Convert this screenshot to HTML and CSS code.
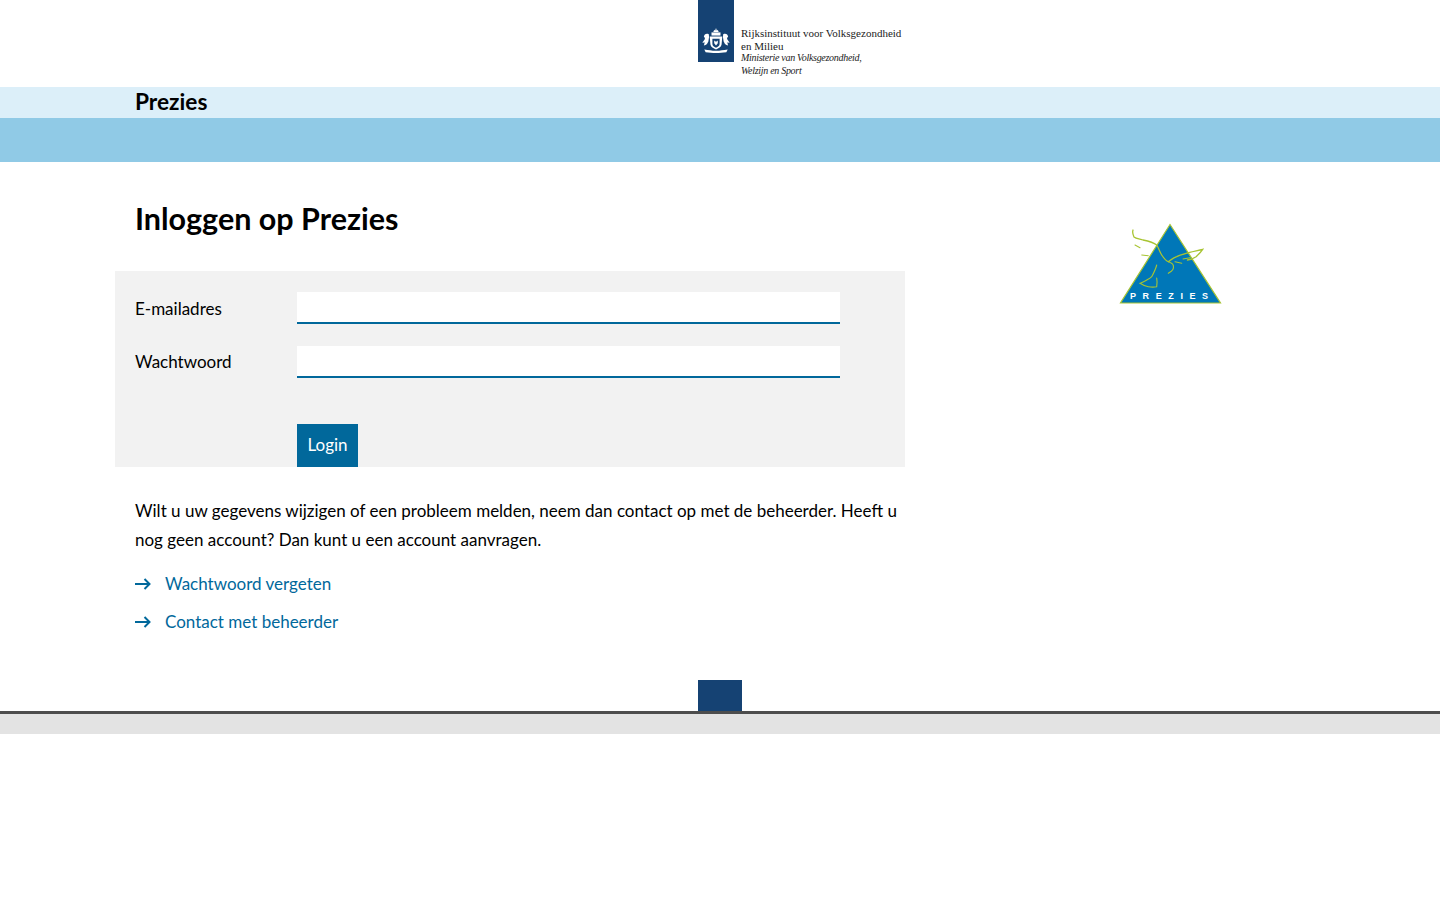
FILE: index.html
```html
<!DOCTYPE html>
<html lang="nl">
<head>
    <meta charset="UTF-8">
    <title>Inloggen op Prezies</title>
    <link rel="stylesheet" href="styles.css">
</head>
<body>
    <header class="top">
        <div class="logo">
            <div class="logo-bar">
                <svg class="crest" width="30" height="27" viewBox="0 0 32 30">
                    <g fill="#fff">
                        <path d="M13 5.500l1-2.500 1 1.200L16 1l1 3.200 1-1.200 1 2.500z"/>
                        <path d="M9 10.500h14l-.8 9c-.4 3-3.200 4.200-6.200 5.500-3-1.300-5.800-2.500-6.200-5.500z"/>
                        <path d="M8 8c-3-1-5 0-5.500 3 1 .5 1.500 1 1 2.500-1 1.500-2 3-3 3.500 1.500.5 2 .5 3 0-.5 1.500-.5 2.500-1 3.500 1.500 0 2.500-.5 3.500-1.500l1.500-3 .8-5z"/>
                        <path d="M24 8c3-1 5 0 5.500 3-1 .5-1.500 1-1 2.500 1 1.500 2 3 3 3.500-1.500.5-2 .5-3 0 .5 1.500.5 2.500 1 3.500-1.500 0-2.500-.5-3.500-1.500l-1.500-3-.8-5z"/>
                        <path d="M3 25c5 .5 8 1.500 13 1.500s8-1 13-1.500l-1.500 3c-4 .5-7.500 1-11.500 1s-7.500-.5-11.500-1z"/>
                        <path d="M11 6h10v3.500H11z"/>
                    </g>
                    <path d="M12 13h8v6c0 2-2 3-4 4-2-1-4-2-4-4z" fill="#154273"/>
                    <path d="M14 15l2 1.500 2-1.500v3l-2 2.500-2-2.500z" fill="#fff"/>
                </svg>
            </div>
            <div class="logo-text">
                <span class="org">Rijksinstituut voor Volksgezondheid</span>
                <span class="org">en Milieu</span>
                <span class="ministry">Ministerie van Volksgezondheid,</span>
                <span class="ministry">Welzijn en Sport</span>
            </div>
        </div>
    </header>

    <div class="app-bar"><div class="app-name">Prezies</div></div>
    <div class="nav-bar"></div>

    <main class="page">
        <div class="content">
            <h1>Inloggen op Prezies</h1>
            <form class="login-form">
                <div class="form-row">
                    <label for="email">E-mailadres</label>
                    <input id="email" type="text">
                </div>
                <div class="form-row">
                    <label for="password" class="label-raised">Wachtwoord</label>
                    <input id="password" type="password">
                </div>
                <div class="form-actions">
                    <button type="button" class="btn">Login</button>
                </div>
            </form>
            <p class="intro">Wilt u uw gegevens wijzigen of een probleem melden, neem dan contact op met de beheerder. Heeft u nog geen account? Dan kunt u een account aanvragen.</p>
            <ul class="links">
                <li>
                    <svg width="16" height="12" viewBox="0 0 16 12"><path d="M0 6h14.500M9.500 1l5 5-5 5" fill="none" stroke="#01689b" stroke-width="2"/></svg>
                    <a href="#">Wachtwoord vergeten</a>
                </li>
                <li>
                    <svg width="16" height="12" viewBox="0 0 16 12"><path d="M0 6h14.500M9.500 1l5 5-5 5" fill="none" stroke="#01689b" stroke-width="2"/></svg>
                    <a href="#">Contact met beheerder</a>
                </li>
            </ul>
        </div>
        <aside class="side">
            <svg class="prezies" width="103" height="84" viewBox="0 0 103 84">
                <path d="M51 2.500L101.500 81H1.500z" fill="#0077b8" stroke="#a8c432" stroke-width="1.200"/>
                <path d="M14 8c-1 3 0 5 1 7 2 2 6 2 9 3 5 1 10 2 13.700 5 2 3 3 7 5 10 2 3 4 6 6.600 6.700 3-2 5-4 8.400-5 4-2 9-3 13-4.400 4-1 9-2 13-3-2 3-4 5-6.600 7.400-3 2-6 3-8.700 3.300" fill="none" stroke="#a8c432" stroke-width="1.300" stroke-linecap="round"/>
                <g fill="none" stroke="#a8c432" stroke-width="1.100" stroke-linecap="round">
                    <path d="M49.300 39.700c3 1 5 2 5 4 .5 2 0 4-2 5.500l-3 2.100"/>
                    <path d="M37.700 43c-1 4-3 8-5 11.700-3 3-8 5-11.700 6.600 3 2 6 3 8.300 3.400 3 .5 6 .5 8.400 0 .5-3 .5-6 0-8.700"/>
                    <path d="M16 23l5 2.700M22.700 33l6.600.7M56 39.700l6.700 1.600M64 37l7-1.300"/>
                </g>
                <text x="11" y="76.500" class="logo-word">PREZIES</text>
            </svg>
        </aside>
    </main>

    <footer class="bottom">
        <div class="foot-block"></div>
        <div class="foot-band"></div>
    </footer>
</body>
</html>
```

FILE: styles.css
```css
body {
    margin: 0;
    font-family: Lato, Arial, sans-serif;
    font-size: 17px;
    color: #000;
    background-color: #fff;
}
.top {
    height: 87px;
    padding-left: calc(50% - 22px);
}
.logo {
    display: flex;
    align-items: flex-start;
    gap: 7px;
}
.logo-bar {
    width: 36px;
    height: 62px;
    background-color: #154273;
    display: flex;
    flex-direction: column;
    justify-content: flex-end;
    align-items: center;
    padding-bottom: 8px;
    box-sizing: border-box;
}
.crest {
    display: block;
}
.logo-text {
    display: flex;
    flex-direction: column;
    padding-top: 27px;
    font-family: "Liberation Serif", serif;
    color: #222;
}
.org {
    font-size: 11px;
    line-height: 12.500px;
}
.ministry {
    font-size: 10px;
    font-style: italic;
    letter-spacing: -0.300px;
    line-height: 12.500px;
}
.app-bar {
    height: 31px;
    background-color: #dceff9;
    padding-left: 135px;
}
.app-name {
    font-size: 22.700px;
    font-weight: 700;
    line-height: 30px;
}
.nav-bar {
    height: 44px;
    background-color: #90cae6;
}
.page {
    display: grid;
    grid-template-columns: 790px 103px;
    column-gap: 214px;
    padding-left: 115px;
}
h1 {
    margin: 0;
    padding: 38px 0 35px 20px;
    font-size: 30.500px;
    line-height: 36px;
    font-weight: 700;
}
.login-form {
    height: 196px;
    background-color: #f2f2f2;
    padding: 21px 20px 0;
    box-sizing: border-box;
    display: flex;
    flex-direction: column;
}
.form-row {
    display: flex;
    align-items: center;
    height: 32px;
    margin-bottom: 22px;
}
label {
    width: 162px;
}
.label-raised {
    padding-bottom: 2px;
}
input {
    width: 543px;
    height: 32px;
    box-sizing: border-box;
    border: 0;
    border-bottom: 2px solid #01689b;
    background-color: #fff;
    border-radius: 0;
    padding: 0 8px;
}
.form-actions {
    margin-top: auto;
    padding-left: 162px;
    display: flex;
}
.btn {
    height: 43px;
    width: 61px;
    padding: 0 0 2px;
    border: 0;
    background-color: #01689b;
    color: #fff;
    font-family: inherit;
    font-size: 17px;
}
.intro {
    margin: 29px 0 0;
    padding-left: 20px;
    line-height: 29px;
}
.links {
    list-style: none;
    margin: 15px 0 0;
    padding: 0 0 0 20px;
}
.links li {
    display: flex;
    align-items: center;
    gap: 14px;
    height: 29px;
    margin-bottom: 9px;
}
.links a {
    color: #01689b;
    text-decoration: none;
}
.side {
    padding-top: 60px;
}
.prezies {
    display: block;
}
.logo-word {
    font-family: "Liberation Sans", Arial, sans-serif;
    font-size: 9px;
    font-weight: bold;
    letter-spacing: 6.600px;
    fill: #fff;
}
.bottom {
    margin-top: 35px;
}
.foot-block {
    width: 44px;
    height: 31px;
    margin: 0 auto;
    background-color: #154273;
}
.foot-band {
    height: 20px;
    background-color: #e3e3e3;
    border-top: 3px solid #4d4d4d;
}
```
